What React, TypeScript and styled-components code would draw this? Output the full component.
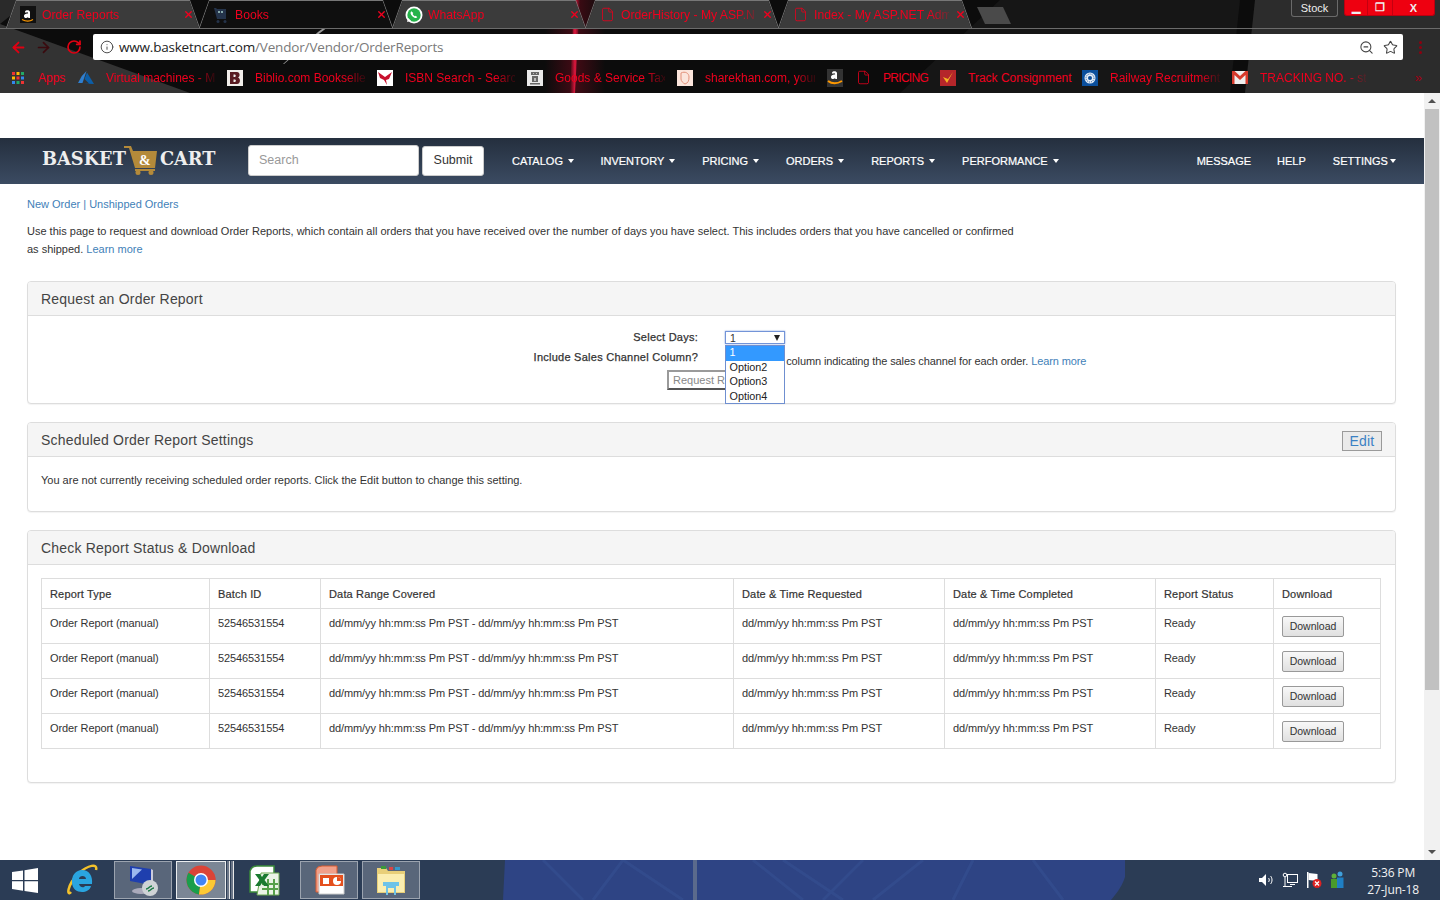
import React from "react";
import styled, { createGlobalStyle } from "styled-components";
import { ArrowLeft, ArrowRight, RotateCw, Info, ZoomOut, Star, File, X } from "lucide-react";

const Global = createGlobalStyle`
  html, body { margin: 0; padding: 0; background: #fff; overflow: hidden; }
  * { box-sizing: border-box; }
  body { font-family: "Liberation Sans", Arial, sans-serif; }
`;

const Screen = styled.div`
  width: 1440px; height: 900px; display: flex; flex-direction: column; overflow: hidden;
`;

/* ---------- browser chrome ---------- */
const Chrome = styled.header`
  position: relative; height: 93px; background: #0c0c0c; flex: none; overflow: hidden;
  display: flex; flex-direction: column;
`;
const ChromeArt = styled.svg`
  position: absolute; inset: 0; width: 1440px; height: 93px;
`;
const TabStrip = styled.div`
  position: relative; height: 29px; flex: none; display: flex; align-items: flex-start;
  padding-left: 6px; border-bottom: 1px solid #6b6b6b;
`;
const Tab = styled.div<{ $active?: boolean }>`
  position: relative; width: 194px; height: 28px; flex: none; margin-right: -1px;
  display: flex; align-items: center; padding: 1px 6px 0 13px;
  gap: 5px;
  &::before {
    content: ""; position: absolute; inset: 0;
    background: #777;
    clip-path: polygon(0 100%, 10px 0, 184px 0, 194px 100%, 193px 100%, 183.5px 1px, 10.5px 1px, 1px 100%);
  }
  &::after {
    content: ""; position: absolute; inset: 1px 1px 0 1px;
    background: ${(p) => (p.$active ? "#0f0f0f" : "#3b3b3b")};
    clip-path: polygon(0 100%, 9.5px 0, 182.5px 0, 192px 100%);
  }
  & > * { position: relative; z-index: 1; }
`;
const TabIcon = styled.span`
  width: 18px; height: 18px; flex: none; display: flex; align-items: center; justify-content: center;
`;
const TabTitle = styled.span`
  flex: 1; min-width: 0; font: 12.2px "Liberation Sans", sans-serif; color: #f0001e; white-space: nowrap;
  mask-image: linear-gradient(90deg, #000 85%, rgba(0,0,0,.25));
`;
const TabClose = styled.span`
  width: 12px; height: 14px; display: flex; align-items: center; justify-content: center; flex: none;
`;
const NewTab = styled.div`
  position: relative; width: 34px; height: 17px; margin: 7px 0 0 6px; background: #4a4a4a;
  clip-path: polygon(0 0, 26px 0, 34px 100%, 8px 100%);
`;
const StockButton = styled.div`
  position: relative; margin-left: auto; width: 47px; height: 17px; background: #2e2e2e;
  border: 1px solid #6a6a6a; border-top: 0; border-radius: 0 0 3px 3px;
  color: #eee; font: 11px "Liberation Sans", sans-serif; display: flex; align-items: center; justify-content: center;
`;
const WindowControls = styled.div`
  position: relative; margin: 0 5px 0 6px; width: 91px; height: 16px; display: flex; background: #ee0010;
  border: 1px solid #b90010; border-top: 0; border-radius: 0 0 3px 3px; overflow: hidden; color: #eee;
`;
const WindowButton = styled.div<{ $w: number }>`
  width: ${(p) => p.$w}px; height: 100%; display: flex; align-items: center; justify-content: center;
  border-right: 1px solid #c40010; font: bold 11px "Liberation Sans", sans-serif;
  &:last-child { border-right: 0; }
`;
const Toolbar = styled.div`
  position: relative; height: 35px; flex: none; display: flex; align-items: center; padding: 1px 0 0 10px;
`;
const NavIcon = styled.span<{ $w: number }>`
  width: ${(p) => p.$w}px; flex: none; display: flex; align-items: center;
`;
const Omnibox = styled.div`
  width: 1310px; height: 26px; background: #fff; border-radius: 2px; display: flex; align-items: center; padding: 0 5px 0 7px;
  font: 13.5px "Open Sans", sans-serif; color: #7a7a7a; margin-left: 1px;
`;
const UrlHost = styled.span`
  color: #222; margin-left: 5px; letter-spacing: -0.2px;
`;
const UrlPath = styled.span`
  letter-spacing: -0.17px;
`;
const OmniTools = styled.span`
  margin-left: auto; display: flex; align-items: center; gap: 9px; color: #444;
`;
const MenuDots = styled.span`
  margin-left: 16px; display: flex; flex-direction: column; gap: 2px;
  & > i { display: block; width: 3px; height: 3px; background: #8e0010; border-radius: 50%; }
`;
const BookmarkBar = styled.div`
  position: relative; height: 29px; flex: none; display: flex; align-items: center; padding: 0 0 2px 10px;
`;
const Bookmark = styled.div`
  display: flex; align-items: center; margin-right: 12px; flex: none;
`;
const BookmarkIcon = styled.span`
  width: 16px; height: 16px; flex: none; display: flex; align-items: center; justify-content: center;
`;
const BookmarkLabel = styled.span<{ $w: number; $fade?: boolean; $ls?: number }>`
  margin-left: 12px; width: ${(p) => p.$w}px; white-space: nowrap;
  font: 12px "Liberation Sans", sans-serif; color: #f0001e; letter-spacing: ${(p) => p.$ls ?? 0}px;
  ${(p) => p.$fade && "mask-image: linear-gradient(90deg, #000 82%, rgba(0,0,0,.2) 98%);"}
`;
const More = styled.span`
  margin-left: auto; margin-right: 18px; color: #a30014; font: 13px "Liberation Sans", sans-serif;
`;

/* ---------- page ---------- */
const Viewport = styled.div`
  flex: 1; min-height: 0; display: flex;
`;
const Main = styled.main`
  width: 1424px; padding-top: 45px; overflow: hidden; color: #333;
  font: 11px/18px "Liberation Sans", sans-serif;
`;
const NavBar = styled.nav`
  height: 46px; display: flex; align-items: center; padding-left: 42px;
  background: linear-gradient(180deg, #242f3e, #3b4b62);
  color: #fff;
`;
const Logo = styled.div`
  width: 178px; height: 32px; flex: none; display: flex; align-items: center; margin-bottom: 2px;
  font: bold 17.8px "DejaVu Serif", serif; color: #eee; white-space: nowrap;
`;
const LogoWord = styled.span`
  margin-bottom: 3px;
`;
const SearchBox = styled.div`
  width: 171px; height: 31px; margin: 0 0 1px 28px; background: #fff; border: 1px solid #ccc; border-radius: 3px;
  padding: 0 10px 2px; display: flex; align-items: center; color: #999; font: 12.5px "Liberation Sans", sans-serif;
`;
const SubmitButton = styled.div`
  width: 62px; height: 30px; margin-left: 3px; background: #fff; border: 1px solid #ccc; border-radius: 3px; padding-bottom: 3px;
  display: flex; align-items: center; justify-content: center; color: #333; font: 12.5px "Liberation Sans", sans-serif;
`;
const NavLinks = styled.div`
  display: flex; align-items: center; margin-left: 28px;
`;
const NavLink = styled.span<{ $gap: number }>`
  margin-right: ${(p) => p.$gap}px; font: 11px "Liberation Sans", sans-serif; -webkit-text-stroke: 0.2px #fff;
  display: flex; align-items: center; white-space: nowrap;
`;
const Caret = styled.i<{ $ml?: number }>`
  display: inline-block; margin-left: ${(p) => p.$ml ?? 5}px; border-left: 3.5px solid transparent; border-right: 3.5px solid transparent;
  border-top: 4px solid #fff;
`;
const Content = styled.div`
  padding: 11px 28px 0 27px;
`;
const TopLinks = styled.div`
  height: 18px; line-height: 18px; color: #3f7fb8;
`;
const A = styled.span`
  color: #3f7fb8;
`;
const Intro = styled.p`
  margin: 9px 0 0; padding-bottom: 5px; width: 995px;
`;
const Panel = styled.section`
  border: 1px solid #ddd; border-radius: 4px; margin-top: 18px; background: #fff;
  box-shadow: 0 1px 1px rgba(0,0,0,.05);
`;
const PanelHead = styled.div`
  height: 34px; background: #f5f5f5; border-bottom: 1px solid #ddd; border-radius: 3px 3px 0 0;
  display: flex; align-items: center; justify-content: space-between; padding: 0 13px;
  font: 14px "Liberation Sans", sans-serif; letter-spacing: 0.2px; color: #444;
`;
const EditButton = styled.div`
  width: 40px; height: 20px; margin-top: 3px; background: #eaeaea; border: 1px solid #9a9a9a;
  display: flex; align-items: center; justify-content: center; color: #3a81c4; font: 14px "Liberation Sans", sans-serif;
`;
const RequestBody = styled.div`
  height: 87px; padding-top: 15px; display: flex; flex-direction: column;
`;
const FormRow = styled.div<{ $h: number }>`
  height: ${(p) => p.$h}px; display: grid; grid-template-columns: 670px 1fr; column-gap: 27px;
`;
const FormLabel = styled.label`
  text-align: right; font: 11px/13px "Liberation Sans", sans-serif; -webkit-text-stroke: 0.25px #333; letter-spacing: 0.25px;
`;
const FormValue = styled.div`
  position: relative; line-height: 13px; padding-top: 4px; padding-left: 2px; letter-spacing: -0.11px;
  white-space: nowrap;
`;
const FormValueTop = styled.div`
  position: relative;
`;
const SelectBox = styled.div`
  width: 60px; height: 13px; border: 1px solid #7394d8; box-shadow: 0 0 1.5px #7394d8; background: #fff; display: flex; align-items: center;
  justify-content: space-between; padding: 0 4px; font: 10.5px "Liberation Sans", sans-serif; color: #333;
`;
const SelectArrow = styled.i`
  border-left: 3.5px solid transparent; border-right: 3.5px solid transparent; border-top: 6px solid #222;
`;
const Menu = styled.div`
  position: absolute; left: 0; top: 14px; width: 60px; height: 59px; background: #fff; border: 1px solid #6f8fd0; z-index: 5;
  font: 10.8px/12px "Liberation Sans", sans-serif; color: #222;
`;
const MenuItem = styled.div<{ $selected?: boolean }>`
  height: 14.5px; padding-left: 3.5px;
  ${(p) => p.$selected && "background: #3399ff; color: #fff;"}
`;
const ButtonRow = styled.div`
  display: flex; justify-content: center;
`;
const RequestButton = styled.div`
  width: 89px; height: 20px; background: #fff; border: 2px solid; border-color: #9a9a9a #555 #555 #9a9a9a;
  color: #888; font: 11px "Liberation Sans", sans-serif; display: flex; align-items: center; justify-content: center; white-space: nowrap;
`;
const Note = styled.div`
  height: 54px; padding: 14px 13px 0;
`;
const TableBody = styled.div`
  padding: 13px 14px 33px 13px;
`;
const Table = styled.table`
  table-layout: fixed; width: 1339px; border-collapse: collapse; font: 11px "Liberation Sans", sans-serif; letter-spacing: -0.1px;
`;
const Col = styled.col<{ $w: number }>`
  width: ${(p) => p.$w}px;
`;
const Th = styled.th`
  height: 30px; border: 1px solid #ddd; padding: 0 8px; text-align: left; font-weight: 400; -webkit-text-stroke: 0.2px #333; color: #333; letter-spacing: 0.16px;
`;
const Td = styled.td`
  height: 35px; border: 1px solid #ddd; padding: 0 8px 6px; vertical-align: middle; white-space: nowrap;
`;
const DownloadCell = styled.td`
  height: 35px; border: 1px solid #ddd; padding: 0 8px;
`;
const DownloadButton = styled.div`
  width: 62px; height: 21px; border: 1px solid #999; border-radius: 2px; background: linear-gradient(#f8f8f8, #e0e0e0);
  display: flex; align-items: center; justify-content: center; color: #333; font-size: 10.5px; letter-spacing: 0;
`;

/* ---------- scrollbar ---------- */
const ScrollBar = styled.div`
  width: 16px; background: #f1f1f1; display: flex; flex-direction: column; align-items: center;
`;
const ScrollArrow = styled.div<{ $up?: boolean }>`
  height: 16px; flex: none; display: flex; align-items: center; justify-content: center;
  &::before {
    content: ""; border-left: 4px solid transparent; border-right: 4px solid transparent;
    ${(p) => (p.$up ? "border-bottom: 4px solid #505050;" : "border-top: 4px solid #505050;")}
  }
`;
const ScrollThumb = styled.div`
  width: 14px; height: 581px; background: #c1c1c1;
`;
const ScrollFill = styled.div`
  flex: 1;
`;

/* ---------- taskbar ---------- */
const Taskbar = styled.footer`
  position: relative; height: 40px; flex: none; background: #2b3c55; display: flex; align-items: center; overflow: hidden;
`;
const Wallpaper = styled.svg`
  position: absolute; left: 503px; top: 0; width: 622px; height: 40px;
`;
const StartSlot = styled.div`
  position: relative; width: 45px; height: 40px; flex: none; display: flex; align-items: center; justify-content: center; padding-left: 5px;
`;
const TaskSlot = styled.div<{ $w: number; $ml?: number; $pl?: number; $pr?: number; $state?: "open" | "active" }>`
  position: relative; width: ${(p) => p.$w}px; height: 38px; margin-left: ${(p) => p.$ml ?? 0}px; flex: none;
  padding: 0 ${(p) => p.$pr ?? 0}px 0 ${(p) => p.$pl ?? 0}px;
  display: flex; align-items: center; justify-content: center;
  ${(p) => p.$state === "open" && "background: rgba(255,255,255,.22); border: 1px solid rgba(255,255,255,.4);"}
  ${(p) => p.$state === "active" && "background: rgba(255,255,255,.38); border: 1px solid rgba(255,255,255,.85);"}
`;
const TaskStripes = styled.div`
  position: relative; width: 7px; height: 38px; margin-left: 1px; flex: none; display: flex; gap: 1px;
  & > i { display: block; width: 3px; height: 100%; background: rgba(255,255,255,.3); border-right: 1px solid #e8e8e8; }
`;
const Tray = styled.div`
  position: relative; margin-left: auto; display: flex; align-items: center; gap: 8px; margin-right: 94px;
`;
const TrayIcon = styled.span`
  width: 16px; height: 16px; display: flex; align-items: center; justify-content: center;
`;
const Clock = styled.div`
  position: absolute; right: 21px; top: 5px; text-align: center; color: #f2f2f2; font: 12px/16.5px "Open Sans", sans-serif; letter-spacing: -0.15px;
`;

/* ---------- drawn icons ---------- */
const AmazonTab = () => (
  <svg width="16" height="17" viewBox="0 0 16 17"><rect width="16" height="17" fill="#111" /><path d="M5 5.500c.6-1.500 4.700-1.800 5 .5v6h-1.700l-.2-.9c-1.500 1.500-4.300 1-4.100-1.200.1-2 2.700-2.400 4.100-2.400.1-1.600-1.700-1.500-2.500-.6z" fill="#fff" /><path d="M2 13.500c3.500 2 8 2 11 0" stroke="#f90" strokeWidth="1.200" fill="none" /></svg>
);
const CartTab = () => (
  <svg width="16" height="18" viewBox="0 0 16 18"><path d="M1 2h2l1 1h9v10H4z" fill="#24334a" /><path d="M5 5h2v2H5zm3 0h2v2H8z" fill="#8aa" /><circle cx="5" cy="15.500" r="1.500" fill="#24334a" /><circle cx="12" cy="15.500" r="1.500" fill="#24334a" /></svg>
);
const WhatsAppIcon = () => (
  <svg width="18" height="18" viewBox="0 0 18 18"><circle cx="9" cy="9" r="8.500" fill="#fff" /><circle cx="9" cy="9" r="6.700" fill="#25b34a" /><path d="M2 16l1.200-4 2.800 2.800z" fill="#fff" /><path d="M6.300 5.300c-1.300 1 -.9 3 1 5 2 1.900 4 2.300 5 1l-1.500-1.500-1 .5c-1-.5-1.700-1.300-2.100-2.200l.6-1z" fill="#fff" /></svg>
);
const AppsIcon = () => (
  <svg width="14" height="14" viewBox="0 0 14 14">
    {["#e33", "#fb0", "#2a6", "#fb0", "#e33", "#38e", "#38e", "#2a6", "#e33"].map((c, i) => (
      <rect key={i} x={1 + (i % 3) * 4.500} y={1 + Math.floor(i / 3) * 4.500} width="3" height="3" fill={c} />
    ))}
  </svg>
);
const AzureIcon = () => (
  <svg width="16" height="14" viewBox="0 0 16 14"><path d="M8.500 0L3.800 5 0 12h4.500z" fill="#2f7fd0" /><path d="M9 1.500L6.500 8l4.500 4.500H4.500L16 13z" fill="#0c5ea8" /></svg>
);
const BiblioIcon = () => (
  <svg width="16" height="16" viewBox="0 0 16 16"><rect width="16" height="16" fill="#f1eeea" /><path d="M3 2h7c3 0 3.500 4.500 1 5.500 3 1 2.500 6.500-1 6.500H3zm3.500 2.500V7h1.500c1 0 1-2.500 0-2.500zm0 5V12H8c1.200 0 1.200-2.500 0-2.500z" fill="#5a1c22" fillRule="evenodd" /></svg>
);
const IsbnIcon = () => (
  <svg width="16" height="16" viewBox="0 0 16 16"><rect width="16" height="16" fill="#fff" /><path d="M1 2l7 5 7-5-3 7-3 1 1 5-3-5-4-2z" fill="#c8102e" /></svg>
);
const EmblemIcon = () => (
  <svg width="16" height="16" viewBox="0 0 16 16"><rect width="16" height="16" fill="#e9e9e9" /><path d="M4 2h8v3H4zM5 6h6v6H5zM3 13h10v1.500H3z" fill="#666" /><path d="M6 3h1v1H6zm3 0h1v1H9zM7 8h2v3H7z" fill="#bbb" /></svg>
);
const SharekhanIcon = () => (
  <svg width="16" height="16" viewBox="0 0 16 16"><rect width="16" height="16" fill="#fbe5dc" /><path d="M4 3c4-2 8 0 8 4s-1 6-4 7c-2-1-4-3-4-5z" fill="none" stroke="#e2917a" /></svg>
);
const AmazonMark = () => (
  <svg width="16" height="18" viewBox="0 0 16 18"><rect width="16" height="18" fill="#333" /><path d="M5 3.500c.6-1.500 4.700-1.800 5 .5v6H8.300l-.2-.9C6.600 10.600 3.800 10.100 4 7.900c.1-2 2.700-2.400 4.100-2.400 .1-1.600-1.700-1.500-2.500-.6z" fill="#fff" /><path d="M1 12c4 3 9 3 14 0" stroke="#f90" strokeWidth="2" fill="none" /></svg>
);
const TrackIcon = () => (
  <svg width="16" height="16" viewBox="0 0 16 16"><rect width="16" height="16" fill="#b5262a" /><path d="M3 7l4 6 6-11-5 7z" fill="#f5b324" /></svg>
);
const RailwayIcon = () => (
  <svg width="16" height="16" viewBox="0 0 16 16"><rect width="16" height="16" fill="#0b4f9c" /><circle cx="8" cy="8" r="5.500" fill="#e7eef7" /><circle cx="8" cy="8" r="2" fill="#0b4f9c" /><circle cx="8" cy="8" r="4" fill="none" stroke="#0b4f9c" strokeDasharray="1 1" /></svg>
);
const GmailIcon = () => (
  <svg width="16" height="13" viewBox="0 0 16 13"><rect width="16" height="13" fill="#eee" /><path d="M0 0h2.500L8 5l5.500-5H16v13h-2.500V4L8 9 2.500 4v9H0z" fill="#d63a2c" /></svg>
);
const CartLogo = () => (
  <svg width="36" height="30" viewBox="0 0 36 30" style={{ margin: "0 1px 0 -3px", flex: "none" }}>
    <path d="M1 1h7l2 5h24l-2 17H12L6 3H1z" fill="#b48a3a" />
    <path d="M12 24h20v2H12z" fill="#b48a3a" />
    <circle cx="15" cy="27.500" r="2.500" fill="#b48a3a" /><circle cx="28" cy="27.500" r="2.500" fill="#b48a3a" />
    <text x="16" y="20" fontFamily="Liberation Serif, serif" fontWeight="700" fontSize="14" fill="#fff">&amp;</text>
  </svg>
);
const WindowsLogo = () => (
  <svg width="26" height="25" viewBox="0 0 26 25"><path d="M0 4l11-1.600V12H0zM12.500 2.200L26 0v12H12.500zM0 13.200h11v9.500L0 21zM12.500 13.200H26V25l-13.500-2z" fill="#fff" /></svg>
);
const IeLogo = () => (
  <svg width="33" height="33" viewBox="0 0 33 33">
    <path d="M6 28C2 33 1 22 14 9c9-8 19-10 17-3" stroke="#f4c22b" strokeWidth="2.500" fill="none" />
    <path d="M17 6a10 11 0 0 0-10 12c0 7 5 10 10 10 4 0 8-2 9-6h-6c-1 2-5 2-6-2h13c1-8-3-14-10-14zm-3 9c0-4 7-4 7 0z" fill="#2aa5e0" fillRule="evenodd" />
  </svg>
);
const RdpIcon = () => (
  <svg width="32" height="33" viewBox="0 0 32 33">
    <path d="M3 2l21 3v16L3 17z" fill="#1f3fae" /><path d="M5 4l10 1.500L5 15z" fill="#9db9ee" />
    <path d="M24 5l2 1v15l-2 0z" fill="#ccd" /><ellipse cx="14" cy="27" rx="9" ry="3" fill="#aab" />
    <circle cx="23" cy="24" r="8" fill="#cfd3d6" /><path d="M19 25c3 0 3-3 6-3m-4 5c3 0 3-3 6-3" stroke="#1a7a45" strokeWidth="1.500" fill="none" />
  </svg>
);
const ChromeLogo = () => (
  <svg width="30" height="30" viewBox="0 0 30 30">
    <circle cx="15" cy="15" r="14.500" fill="#db4437" />
    <path d="M15 15L2.500 7.700A14.500 14.500 0 0 0 13 29.400z" fill="#1a9e4b" />
    <path d="M15 15h14.500A14.500 14.500 0 0 1 13 29.400z" fill="#fcc934" />
    <path d="M15 8.500h13A14.500 14.500 0 0 1 29.500 15L22 15z" fill="#db4437" />
    <circle cx="15" cy="15" r="7" fill="#fff" /><circle cx="15" cy="15" r="5.500" fill="#4285f4" />
  </svg>
);
const ExcelIcon = () => (
  <svg width="33" height="31" viewBox="0 0 33 31">
    <path d="M3 6q2-5 7-5h17v26H3z" fill="#fff" stroke="#3a8a3a" strokeWidth="1.500" />
    <path d="M14 8h18v22H10z" fill="#eaf3e6" stroke="#6aa84f" /><path d="M15 19h16M15 24h16M21 14v16M27 14v16" stroke="#56a04a" strokeWidth="2" />
    <path d="M8 9h5l2 3 2-3h5l-4.500 6 4.500 6h-5l-2-3-2 3H8l4.500-6z" fill="#1a7a30" />
  </svg>
);
const PptIcon = () => (
  <svg width="32" height="31" viewBox="0 0 32 31">
    <path d="M3 5q1-4 6-4h15v26H3z" fill="#f0a08a" stroke="#d85a30" />
    <path d="M6 9h25v20H6z" fill="#fff" stroke="#ccc" /><path d="M7 10h23v11H7z" fill="#e4501e" />
    <path d="M10 13h6v6h-6z" fill="#fff" /><circle cx="24" cy="16" r="4" fill="#fff" /><path d="M24 16v-4a4 4 0 0 1 4 4z" fill="#e4501e" />
  </svg>
);
const ExplorerIcon = () => (
  <svg width="32" height="32" viewBox="0 0 32 32">
    <path d="M2 4h9l2 3h17v22H2z" fill="#e8cf78" /><path d="M3 10h26v18H3z" fill="#fbeeb0" />
    <path d="M6 2h5v3H6z" fill="#3a9a3a" /><path d="M14 3h4v3h-4z" fill="#d44" /><path d="M20 3h5v3h-5z" fill="#39c" />
    <path d="M8 18h16v4h-3v9h-2v-7h-6v7h-2v-9H8z" fill="#6ec3e8" />
  </svg>
);
const SpeakerIcon = () => (
  <svg width="16" height="16" viewBox="0 0 16 16" fill="none"><path d="M1 6h3l4-4v12l-4-4H1z" fill="#fff" /><path d="M10.500 6c1 1 1 3 0 4M12.500 4c2 2 2 6 0 8" stroke="#fff" /></svg>
);
const NetworkIcon = () => (
  <svg width="16" height="16" viewBox="0 0 16 16" fill="none" stroke="#fff"><rect x="5.500" y="2.500" width="10" height="8" /><path d="M3 5v9M1 14.500h9M8 12.500h5" /><circle cx="3" cy="3" r="1.800" /></svg>
);
const FlagIcon = () => (
  <svg width="16" height="16" viewBox="0 0 16 16"><path d="M1 0h1.500v16H1z" fill="#fff" /><path d="M2.500 1l9 1v7l-9-1z" fill="#fff" /><circle cx="11" cy="11.500" r="4.500" fill="#d22" /><path d="M9 9.500l4 4m0-4l-4 4" stroke="#fff" strokeWidth="1.300" /></svg>
);
const PeopleIcon = () => (
  <svg width="16" height="18" viewBox="0 0 16 18"><circle cx="4" cy="5" r="2.500" fill="#5fb03a" /><path d="M1 8h6v9H1z" fill="#4a9a2a" /><circle cx="10" cy="3" r="2.500" fill="#3fa0dc" /><path d="M7 6.500h6.500v10.500H7z" fill="#1f7fc4" /></svg>
);

const RED = "#e5001c";
const DocIcon = () => <File size={15} color={RED} strokeWidth={1.3} />;

const tabs: { icon: React.ReactNode; title: string; active?: boolean }[] = [
  { icon: <AmazonTab />, title: "Order Reports" },
  { icon: <CartTab />, title: "Books", active: true },
  { icon: <WhatsAppIcon />, title: "WhatsApp" },
  { icon: <DocIcon />, title: "OrderHistory - My ASP.N" },
  { icon: <DocIcon />, title: "Index - My ASP.NET Adm" },
];

const bookmarks: { icon: React.ReactNode; label?: string; w?: number; fade?: boolean; ls?: number }[] = [
  { icon: <AppsIcon />, label: "Apps", w: 28 },
  { icon: <AzureIcon />, label: "Virtual machines - M", w: 109, fade: true },
  { icon: <BiblioIcon />, label: "Biblio.com Bookselle", w: 110, fade: true },
  { icon: <IsbnIcon />, label: "ISBN Search - Search", w: 110, fade: true },
  { icon: <EmblemIcon />, label: "Goods & Service Tax", w: 110, fade: true },
  { icon: <SharekhanIcon />, label: "sharekhan.com, your", w: 110, fade: true },
  { icon: <AmazonMark /> },
  { icon: <File size={15} color={RED} strokeWidth={1.3} />, label: "PRICING", w: 45, ls: -0.7 },
  { icon: <TrackIcon />, label: "Track Consignment", w: 102 },
  { icon: <RailwayIcon />, label: "Railway Recruitment", w: 110, fade: true },
  { icon: <GmailIcon />, label: "TRACKING NO. - sto", w: 106, fade: true },
];

const navLeft: [string, number][] = [
  ["CATALOG", 26.5], ["INVENTORY", 27], ["PRICING", 27], ["ORDERS", 27], ["REPORTS", 27], ["PERFORMANCE", 138],
];

const columns = [168, 111, 413, 211, 211, 118, 107];
const heads = ["Report Type", "Batch ID", "Data Range Covered", "Date & Time Requested", "Date & Time Completed", "Report Status", "Download"];
const stamp = "dd/mm/yy hh:mm:ss Pm PST";

export default function App() {
  return (
    <Screen>
      <Global />
      <Chrome>
        <ChromeArt viewBox="0 0 1440 93">
          <defs>
            <linearGradient id="streak" x1="0" x2="1"><stop offset="0" stopColor="#d0103a" stopOpacity="0" /><stop offset=".5" stopColor="#e0183e" /><stop offset="1" stopColor="#d0103a" stopOpacity="0" /></linearGradient>
            <linearGradient id="glow" x1="0" x2="1"><stop offset="0" stopColor="#5a0a18" stopOpacity="0" /><stop offset=".5" stopColor="#5a0a18" stopOpacity=".7" /><stop offset="1" stopColor="#5a0a18" stopOpacity="0" /></linearGradient>
          </defs>
          <path d="M0 24L190 93H0z" fill="#333" />
          <path d="M0 0h30L0 24z" fill="#2a2a2a" />
          <path d="M362 0h2L320 33l-36 31h-1l35-32z" fill="#c8c8c8" opacity=".75" />
          <path d="M545 0h60v93h-60z" fill="url(#glow)" />
          <path d="M574 0h6l-5 93h-5z" fill="url(#streak)" />
          <path d="M1000 0h240l-10 93H900z" fill="#161616" />
          <path d="M1245 93L1255 0h185v93z" fill="#2c2c2c" />
        </ChromeArt>
        <TabStrip>
          {tabs.map((t) => (
            <Tab key={t.title} $active={t.active}>
              <TabIcon>{t.icon}</TabIcon>
              <TabTitle>{t.title}</TabTitle>
              <TabClose><X size={11} color="#f0001e" strokeWidth={3} /></TabClose>
            </Tab>
          ))}
          <NewTab />
          <StockButton>Stock</StockButton>
          <WindowControls>
            <WindowButton $w={24}>▁</WindowButton>
            <WindowButton $w={25}>❐</WindowButton>
            <WindowButton $w={42}>X</WindowButton>
          </WindowControls>
        </TabStrip>
        <Toolbar>
          <NavIcon $w={25}><ArrowLeft size={17} color="#e00012" strokeWidth={2.6} /></NavIcon>
          <NavIcon $w={31}><ArrowRight size={17} color="#3a0a0e" strokeWidth={2.4} /></NavIcon>
          <NavIcon $w={26}><RotateCw size={16} color="#e00012" strokeWidth={2.6} /></NavIcon>
          <Omnibox>
            <Info size={14} color="#444" strokeWidth={1.6} />
            <UrlHost>www.basketncart.com</UrlHost>
            <UrlPath>/Vendor/Vendor/OrderReports</UrlPath>
            <OmniTools>
              <ZoomOut size={15} strokeWidth={1.7} />
              <Star size={15} strokeWidth={1.7} />
            </OmniTools>
          </Omnibox>
          <MenuDots><i /><i /><i /></MenuDots>
        </Toolbar>
        <BookmarkBar>
          {bookmarks.map((b, i) => (
            <Bookmark key={i}>
              <BookmarkIcon>{b.icon}</BookmarkIcon>
              {b.label && <BookmarkLabel $w={b.w ?? 100} $fade={b.fade} $ls={b.ls}>{b.label}</BookmarkLabel>}
            </Bookmark>
          ))}
          <More>»</More>
        </BookmarkBar>
      </Chrome>

      <Viewport>
        <Main>
          <NavBar>
            <Logo><LogoWord>BASKET</LogoWord><CartLogo /><LogoWord>CART</LogoWord></Logo>
            <SearchBox>Search</SearchBox>
            <SubmitButton>Submit</SubmitButton>
            <NavLinks>
              {navLeft.map(([label, gap]) => (
                <NavLink key={label} $gap={gap}>{label}<Caret /></NavLink>
              ))}
              <NavLink $gap={26}>MESSAGE</NavLink>
              <NavLink $gap={27}>HELP</NavLink>
              <NavLink $gap={0}>SETTINGS<Caret $ml={2} /></NavLink>
            </NavLinks>
          </NavBar>
          <Content>
            <TopLinks>New Order | Unshipped Orders</TopLinks>
            <Intro>
              Use this page to request and download Order Reports, which contain all orders that you have received over the number of days you have select. This includes orders that you have cancelled or confirmed as shipped. <A>Learn more</A>
            </Intro>
            <Panel>
              <PanelHead>Request an Order Report</PanelHead>
              <RequestBody>
                <FormRow $h={20}>
                  <FormLabel>Select Days:</FormLabel>
                  <FormValueTop>
                    <SelectBox>1<SelectArrow /></SelectBox>
                    <Menu>
                      <MenuItem $selected>1</MenuItem>
                      <MenuItem>Option2</MenuItem>
                      <MenuItem>Option3</MenuItem>
                      <MenuItem>Option4</MenuItem>
                    </Menu>
                  </FormValueTop>
                </FormRow>
                <FormRow $h={19}>
                  <FormLabel>Include Sales Channel Column?</FormLabel>
                  <FormValue>Add a sales column indicating the sales channel for each order. <A>Learn more</A></FormValue>
                </FormRow>
                <ButtonRow><RequestButton>Request Report</RequestButton></ButtonRow>
              </RequestBody>
            </Panel>
            <Panel>
              <PanelHead>Scheduled Order Report Settings<EditButton>Edit</EditButton></PanelHead>
              <Note>You are not currently receiving scheduled order reports. Click the Edit button to change this setting.</Note>
            </Panel>
            <Panel>
              <PanelHead>Check Report Status &amp; Download</PanelHead>
              <TableBody>
                <Table>
                  <colgroup>{columns.map((w, i) => <Col key={i} $w={w} />)}</colgroup>
                  <thead><tr>{heads.map((h) => <Th key={h}>{h}</Th>)}</tr></thead>
                  <tbody>
                    {[0, 1, 2, 3].map((r) => (
                      <tr key={r}>
                        <Td>Order Report (manual)</Td>
                        <Td>52546531554</Td>
                        <Td>{stamp} - {stamp}</Td>
                        <Td>{stamp}</Td>
                        <Td>{stamp}</Td>
                        <Td>Ready</Td>
                        <DownloadCell><DownloadButton>Download</DownloadButton></DownloadCell>
                      </tr>
                    ))}
                  </tbody>
                </Table>
              </TableBody>
            </Panel>
          </Content>
        </Main>
        <ScrollBar>
          <ScrollArrow $up />
          <ScrollThumb />
          <ScrollFill />
          <ScrollArrow />
        </ScrollBar>
      </Viewport>

      <Taskbar>
        <Wallpaper viewBox="0 0 622 40" preserveAspectRatio="none">
          <path d="M2 0H622c4 14-2 26-14 40H0z" fill="#2e4484" />
          <path d="M40 0l40 40M120 0l60 40M280 0l60 40M360 0l-40 40M420 0l-50 40M470 0l-20 40M530 0l30 40M250 0l50 40M90 40l30-40" stroke="#4562a8" strokeWidth="3" opacity=".22" fill="none" />
          <path d="M190 0h4v40h-4z" fill="#6f7a90" opacity=".7" />
        </Wallpaper>
        <StartSlot><WindowsLogo /></StartSlot>
        <TaskSlot $w={69} $pl={3}><IeLogo /></TaskSlot>
        <TaskSlot $w={58} $state="open"><RdpIcon /></TaskSlot>
        <TaskSlot $w={50} $ml={4} $state="active"><ChromeLogo /></TaskSlot>
        <TaskStripes><i /><i /></TaskStripes>
        <TaskSlot $w={66} $pr={8}><ExcelIcon /></TaskSlot>
        <TaskSlot $w={58} $state="open"><PptIcon /></TaskSlot>
        <TaskSlot $w={58} $ml={4} $state="open"><ExplorerIcon /></TaskSlot>
        <Tray>
          <TrayIcon><SpeakerIcon /></TrayIcon>
          <TrayIcon><NetworkIcon /></TrayIcon>
          <TrayIcon><FlagIcon /></TrayIcon>
          <TrayIcon><PeopleIcon /></TrayIcon>
        </Tray>
        <Clock>5:36 PM<br />27-Jun-18</Clock>
      </Taskbar>
    </Screen>
  );
}
